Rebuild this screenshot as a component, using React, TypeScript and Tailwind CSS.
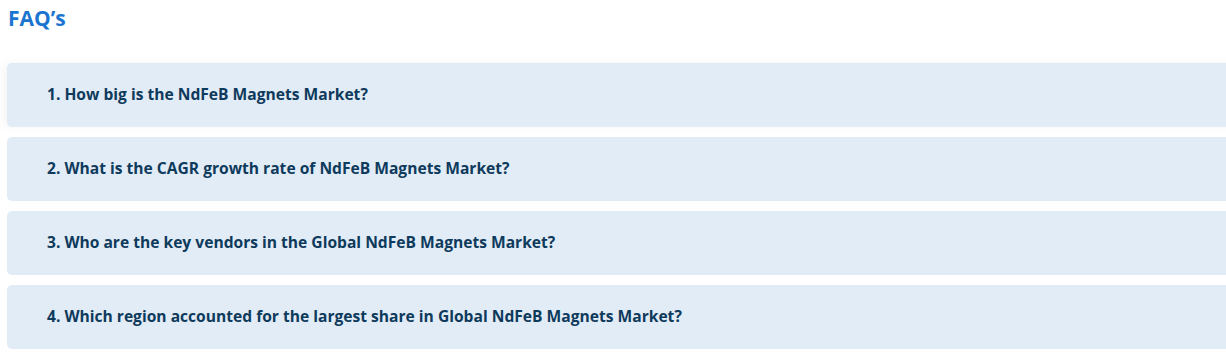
import React from "react";

const faqs = [
  "1. How big is the NdFeB Magnets Market?",
  "2. What is the CAGR growth rate of NdFeB Magnets Market?",
  "3. Who are the key vendors in the Global NdFeB Magnets Market?",
  "4. Which region accounted for the largest share in Global NdFeB Magnets Market?",
];

export default function App() {
  return (
    <div
      className="w-[1226px] h-[358px] overflow-hidden bg-white"
      style={{ fontFamily: "'Open Sans', Lato, sans-serif" }}
    >
      <div className="pt-[4px] pl-[8px]">
        <h2 className="text-[21px] leading-[29px] font-bold text-[#1b75d0]">FAQ’s</h2>
      </div>
      <div className="mt-[30px] pl-[7px] flex flex-col gap-[10px]">
        {faqs.map((q, i) => (
          <div
            key={i}
            className={`w-[1240px] h-[64px] rounded-[5px] bg-[#e2ecf6] flex items-center pl-[40px] ${
              i === 0 ? "shadow-[-4px_0_8px_rgba(0,0,0,0.04)]" : ""
            }`}
          >
            <span className="text-[15.6px] font-bold text-[#0e3a5c]">{q}</span>
          </div>
        ))}
      </div>
    </div>
  );
}
